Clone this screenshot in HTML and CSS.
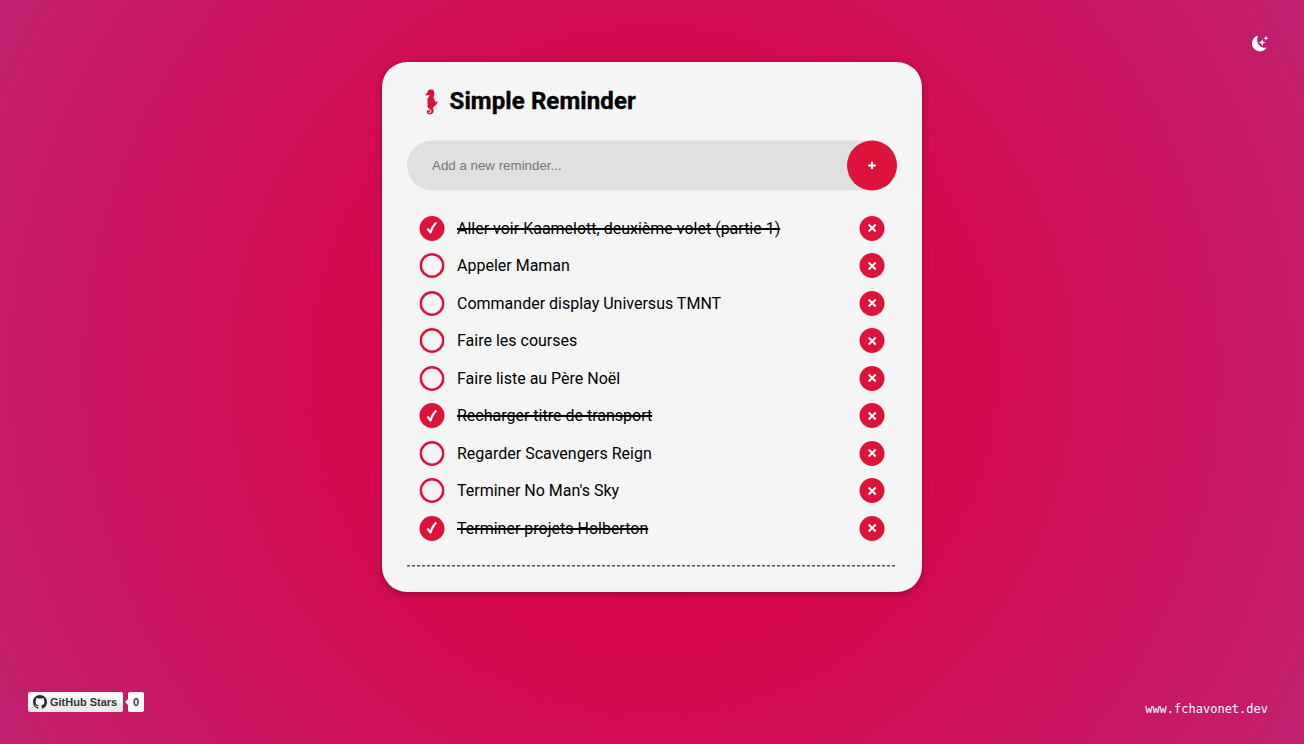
FILE: index.html
```html
<!DOCTYPE html>
<html lang="fr">
<head>
<meta charset="utf-8">
<title>Simple Reminder</title>
<link rel="stylesheet" href="styles.css">
</head>
<body>
<svg class="defs" width="0" height="0">
  <symbol id="check" viewBox="0 0 12 14"><path d="M2.4 8.2 5 11.5 Q6.5 6 10.2 2" fill="none" stroke="#fff" stroke-width="2.1" stroke-linecap="round" stroke-linejoin="round"/></symbol>
  <symbol id="cross" viewBox="0 0 9 8"><path d="M1.9 1.2 7.5 6.8M7.5 1.2 1.9 6.8" stroke="#fff" stroke-width="2" stroke-linecap="square"/></symbol>
</svg>
<button class="theme" aria-label="Theme"><svg width="18" height="18" viewBox="0 0 18 18" fill="#fff"><path d="M7.2.6A8 8 0 1 0 15.8 12.6C11.4 13.6 6.9 10.7 6.2 6.3 5.9 4.2 6.2 2.2 7.2.6z"/><path d="M11.2 4.2 12.2 6.6 14.6 7.6 12.2 8.6 11.2 11 10.2 8.6 7.8 7.6 10.2 6.6zM15 .8 15.7 2.5 17.4 3.2 15.7 3.9 15 5.6 14.3 3.9 12.6 3.2 14.3 2.5z"/></svg></button>
<main class="card">
  <h1 class="title"><svg class="seahorse" width="15" height="26" viewBox="0 0 15 26" fill="#dc143c"><path d="M4.2 1.2 6.3.4 8.4.6 9.7 1.7 10.4 3.5 10.2 6 9.5 8.2 10.4 10.2 11.2 12.7 14 12.7 12.8 14.4 12.5 15.5 10.5 16.9 9.2 18.4 8.9 19.7 9.8 21.5 9.4 23.6 7.8 25.1 5.3 25.5 3.3 24.4 2.7 22.6 3.9 21.1 5.7 21.3 6.4 22.4 5.7 23.2 4.6 22.7 4.4 23.6 5.5 24.1 7 23.4 7.4 22 6.1 20.4 4.2 18.9 3.3 16.7 3.9 15.2 3.2 13.6 3.8 12 3.1 10.4 4.1 9 5.4 7 5 5.9 2.3 6.4 1.2 5.7 2.8 4.6 3.6 3z"/></svg><span>Simple Reminder</span></h1>
  <form class="entry"><input class="field" type="text" placeholder="Add a new reminder..."><button class="add" type="button" aria-label="Add"><svg width="8" height="8" viewBox="0 0 8 8"><path d="M4 .2V7.8M.2 4H7.8" stroke="#fff" stroke-width="2.2"/></svg></button></form>
  <ul class="list">
    <li class="item done"><span class="tick"><svg width="12" height="14"><use href="#check"/></svg></span><span class="label">Aller voir Kaamelott, deuxième volet (partie 1)</span><button class="remove"><svg width="9" height="8"><use href="#cross"/></svg></button></li>
    <li class="item"><span class="tick"></span><span class="label">Appeler Maman</span><button class="remove"><svg width="9" height="8"><use href="#cross"/></svg></button></li>
    <li class="item"><span class="tick"></span><span class="label">Commander display Universus TMNT</span><button class="remove"><svg width="9" height="8"><use href="#cross"/></svg></button></li>
    <li class="item"><span class="tick"></span><span class="label">Faire les courses</span><button class="remove"><svg width="9" height="8"><use href="#cross"/></svg></button></li>
    <li class="item"><span class="tick"></span><span class="label">Faire liste au Père Noël</span><button class="remove"><svg width="9" height="8"><use href="#cross"/></svg></button></li>
    <li class="item done"><span class="tick"><svg width="12" height="14"><use href="#check"/></svg></span><span class="label">Recharger titre de transport</span><button class="remove"><svg width="9" height="8"><use href="#cross"/></svg></button></li>
    <li class="item"><span class="tick"></span><span class="label">Regarder Scavengers Reign</span><button class="remove"><svg width="9" height="8"><use href="#cross"/></svg></button></li>
    <li class="item"><span class="tick"></span><span class="label">Terminer No Man's Sky</span><button class="remove"><svg width="9" height="8"><use href="#cross"/></svg></button></li>
    <li class="item done"><span class="tick"><svg width="12" height="14"><use href="#check"/></svg></span><span class="label">Terminer projets Holberton</span><button class="remove"><svg width="9" height="8"><use href="#cross"/></svg></button></li>
  </ul>
</main>
<footer class="footer">
  <div class="github"><span class="stars"><svg width="14" height="14" viewBox="0 0 16 16" fill="#24292f"><path d="M8 0C3.58 0 0 3.58 0 8c0 3.54 2.29 6.53 5.47 7.59.4.07.55-.17.55-.38 0-.19-.01-.82-.01-1.49-2.01.37-2.53-.49-2.69-.94-.09-.23-.48-.94-.82-1.13-.28-.15-.68-.52-.01-.53.63-.01 1.08.58 1.23.82.72 1.21 1.87.87 2.33.66.07-.52.28-.87.51-1.07-1.78-.2-3.64-.89-3.64-3.95 0-.87.31-1.59.82-2.15-.08-.2-.36-1.02.08-2.12 0 0 .67-.21 2.2.82.64-.18 1.32-.27 2-.27s1.36.09 2 .27c1.53-1.04 2.2-.82 2.2-.82.44 1.1.16 1.92.08 2.12.51.56.82 1.27.82 2.15 0 3.07-1.87 3.75-3.65 3.95.29.25.54.73.54 1.48 0 1.07-.01 1.93-.01 2.2 0 .21.15.46.55.38A8.01 8.01 0 0 0 16 8c0-4.42-3.58-8-8-8z"/></svg>GitHub Stars</span><span class="count">0</span></div>
  <a class="site">www.fchavonet.dev</a>
</footer>
</body>
</html>
```
FILE: styles.css
```css
* { box-sizing: border-box; }
body {
  margin: 0;
  height: 744px;
  overflow: hidden;
  display: flex;
  flex-direction: column;
  align-items: center;
  padding-top: 62px;
  font-family: Roboto, sans-serif;
  background: radial-gradient(circle, #e00040 0%, #d30c53 48%, #c1206f 100%);
}
button { border: 0; padding: 0; }
svg { display: block; }
.defs { position: absolute; }
.theme { position: absolute; top: 35px; right: 35px; background: none; }
.card {
  width: 540px;
  height: 529.5px;
  padding: 25px;
  border-radius: 25px;
  background: #f5f5f5;
  box-shadow: 0 2px 7px rgba(0, 0, 0, .3);
}
.title {
  display: flex;
  align-items: center;
  gap: 11px;
  height: 28px;
  margin: 0 0 25.5px;
  padding-left: 16.5px;
  font-size: 24px;
  line-height: 28px;
  font-weight: 700;
  letter-spacing: .1px;
  -webkit-text-stroke: .4px #000;
  white-space: nowrap;
}
.seahorse { margin-top: 1px; }
.entry {
  display: flex;
  height: 50px;
  border-radius: 25px;
  background: #e0e0e0;
  transform: translateY(-.5px);
}
.field {
  flex: 1;
  border: 0;
  padding: 0 25px;
  background: none;
  font: 13.33px "Liberation Sans", Arial, sans-serif;
}
.field::placeholder { color: #757575; }
.add, .remove, .tick {
  display: flex;
  align-items: center;
  justify-content: center;
  flex: none;
  border-radius: 50%;
  background: #dc143c;
}
.add { width: 50px; height: 50px; }
.list {
  list-style: none;
  margin: 25px 0 0;
  padding: 0 12.5px 26px;
  display: flex;
  flex-direction: column;
  gap: 12.5px;
  background:
    repeating-linear-gradient(90deg, #555 0 3px, transparent 3px 4.995px) left bottom 1px / 100% 1px no-repeat,
    repeating-linear-gradient(90deg, #999 0 3px, transparent 3px 4.995px) left bottom / 100% 1px no-repeat;
}
.item { display: flex; align-items: center; height: 25px; }
.tick, .remove { width: 25px; height: 25px; transform: translateX(-.5px); }
.item:not(.done) .tick { background: none; box-shadow: inset 0 0 0 2.5px #dc143c; }
.label { font-size: 16px; line-height: 19px; }
.tick + .label { margin-left: 12.5px; }
.done .label { text-decoration: line-through; text-decoration-thickness: 1.5px; }
.remove { margin-left: auto; }
.footer {
  width: 100%;
  margin-top: auto;
  padding: 0 36px 26px 28px;
  display: flex;
  justify-content: space-between;
  align-items: flex-end;
}
.github {
  display: flex;
  gap: 5px;
  margin-bottom: 6px;
  font: bold 11px/20px "Liberation Sans", Arial, sans-serif;
  color: #333;
}
.stars {
  display: flex;
  align-items: center;
  gap: 3px;
  width: 95px;
  height: 20px;
  padding-left: 5px;
  border-radius: 2px;
  background: linear-gradient(#fff, #e8e8e8);
  white-space: nowrap;
}
.count { position: relative; width: 16px; text-align: center; background: #fff; border-radius: 2px; }
.count::before {
  content: "";
  position: absolute;
  left: -3px;
  top: 7px;
  border: solid transparent;
  border-width: 3px 3px 3px 0;
  border-right-color: #fff;
}
.site { font: 12px/17px "DejaVu Sans Mono", monospace; color: #fff; }
```
